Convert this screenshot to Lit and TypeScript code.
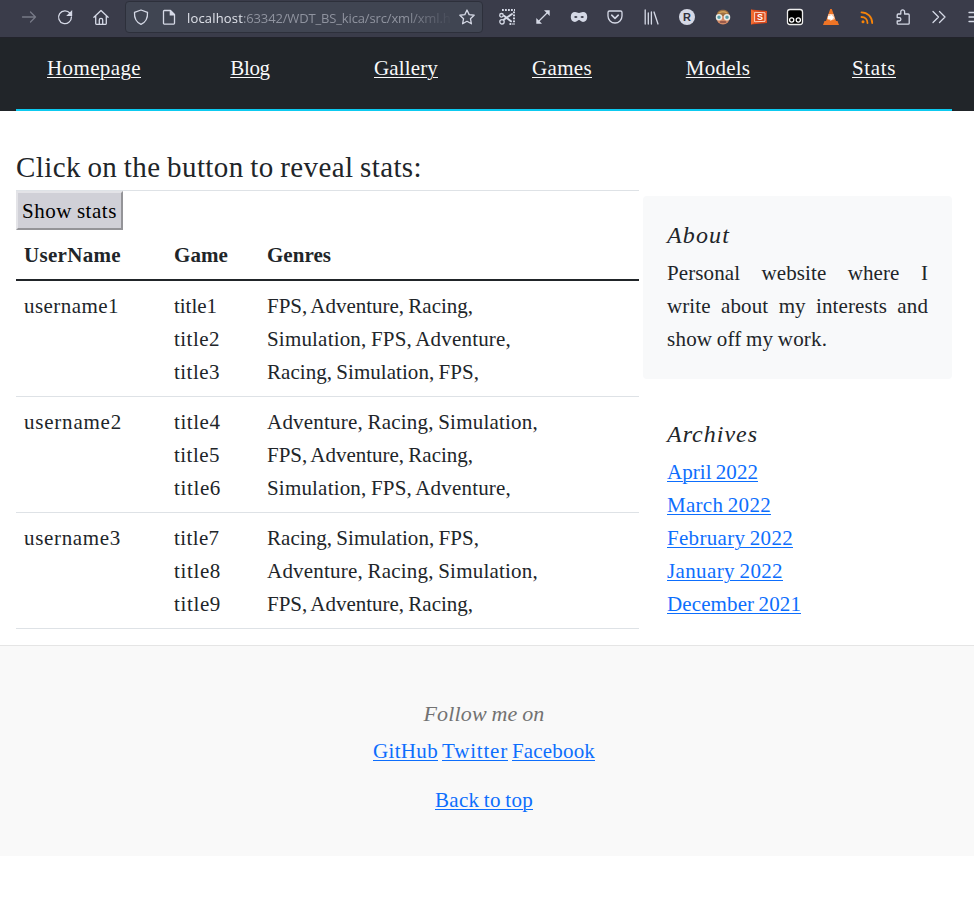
import { LitElement, html, svg, css, nothing } from "lit";
import { customElement } from "lit/decorators.js";

type Link = [label: string, width: number];

const NAV: Link[] = [["Homepage", 94], ["Blog", 39.5], ["Gallery", 64], ["Games", 60], ["Models", 64.5], ["Stats", 44]];
const ARCHIVES: Link[] = [["April 2022", 91], ["March 2022", 104], ["February 2022", 126], ["January 2022", 116], ["December 2021", 134]];
const SOCIAL: Link[] = [["GitHub", 65], ["Twitter", 66], ["Facebook", 83]];

const FAR: Link = ["FPS, Adventure, Racing,", 206];
const SFA: Link = ["Simulation, FPS, Adventure,", 244];
const RSF: Link = ["Racing, Simulation, FPS,", 212];
const ARS: Link = ["Adventure, Racing, Simulation,", 271];

const ROWS: { user: Link; titles: Link[]; genres: Link[] }[] = [
  { user: ["username1", 95], titles: [["title1", 43], ["title2", 46], ["title3", 46]], genres: [FAR, SFA, RSF] },
  { user: ["username2", 98], titles: [["title4", 46.5], ["title5", 46], ["title6", 47]], genres: [ARS, FAR, SFA] },
  { user: ["username3", 97], titles: [["title7", 45.5], ["title8", 47], ["title9", 47]], genres: [RSF, ARS, FAR] },
];

const ICONS: Record<string, unknown> = {
  forward: svg`<path class="dim" d="M1.5 8h13M9.5 3l5 5-5 5"/>`,
  reload: svg`<path d="M13 4.2A6.4 6.4 0 1 0 14.4 8"/><path class="solid" d="M15.2 1v6H9.2z"/>`,
  home: svg`<path d="M.9 8.3 8 1.5l7.100 6.800M2.700 7v7.600a.7.7 0 0 0 .7.7h9.200a.7.7 0 0 0 .7-.7V7M6.300 15v-4a1.700 1.700 0 0 1 3.400 0v4"/>`,
  shield: svg`<path d="M8 1 14.500 3.400c.3 5.200-1.400 9.700-6.500 12C2.900 13.100 1.200 8.600 1.500 3.400z"/>`,
  page: svg`<path d="M3.300 1.500h6.200l4 4v8.800a.8.8 0 0 1-.8.8H3.300a.8.8 0 0 1-.8-.8v-12a.8.8 0 0 1 .8-.8z"/><path class="solid" d="M8.700 1.500h1l4 4v1h-5z"/>`,
  star: svg`<path d="m8 1 2.150 4.600 5 .65-3.700 3.450.95 5.050L8 12.300l-4.400 2.450.95-5.050L.85 6.250l5-.65z"/>`,
  scissors: svg`<path class="dots" d="M3 1h13M15 2.500v13M10.500 15H14"/><path stroke-width="2" d="m5 10.500 8-5.500M5 6.800 12 12.300"/><circle cx="2.500" cy="6.300" r="1.800"/><circle cx="3" cy="12.800" r="2.200"/>`,
  resize: svg`<path d="M3 13 13 3"/><path class="solid" d="M9 1.300h5.700V7zM1.300 9v5.700H7z"/>`,
  mask: svg`<path class="solid" fill-rule="evenodd" d="M4 3c1.800 0 2.500 1 4 1s2.200-1 4-1c2.600 0 4.200 2 4.200 4.800S14.600 13 12 13c-2 0-2.700-1.900-4-1.900S6 13 4 13c-2.600 0-4.200-2.400-4.200-5.200S1.400 3 4 3zM3 8.100c1 1.300 2.700 1.300 3.600 0-1-1.400-2.600-1.400-3.600 0zm6.400 0c1 1.300 2.700 1.300 3.600 0-1-1.400-2.600-1.400-3.600 0z"/>`,
  pocket: svg`<path d="M2.500 2h11A1.500 1.500 0 0 1 15 3.500V7A7 7 0 0 1 1 7V3.500A1.500 1.500 0 0 1 2.500 2z"/><path stroke-width="1.600" d="m4.700 6.200 3.300 3.100 3.300-3.100"/>`,
  library: svg`<path d="M2.200 1v14M5.300 4v11M8.400 3v12M11 3l4 12"/>`,
  circled: svg`<circle class="solid" cx="8" cy="8" r="8"/><text x="8" y="12" class="letter dark">R</text>`,
  face: svg`<circle cx="8" cy="8.800" r="6.800" fill="#d38b67" stroke="none"/><path d="M1.500 7C2 2 5 .8 8 .8S14 2 14.500 7z" fill="#9c7043" stroke="none"/><path d="M4 4q4-2.500 8 0" stroke="#d4a35c"/><path d="M5.500 13h5" stroke="#884b42"/><circle cx="4" cy="8.200" r="2.500" fill="#579ba4" stroke="#e9ece9" stroke-width="1.500"/><circle cx="12" cy="8.200" r="2.500" fill="#579ba4" stroke="#e9ece9" stroke-width="1.500"/>`,
  slides: svg`<path d="m0 .500 16 1.500v12L0 15.500z" fill="#dc4a1c" stroke="none"/><path d="M0 .500 3 2v12l-3 1.500z" fill="#f16b31" stroke="none"/><path d="m4 3.300 10 .5v8.500l-10 .5z" stroke="#fbd9c8" stroke-width="1"/><text x="9.100" y="11.200" class="letter small">S</text>`,
  monkey: svg`<rect x=".5" y=".5" width="15" height="15" rx="2.500" fill="#000" stroke="#eee"/><circle cx="4.700" cy="11" r="2.100" stroke="#fff"/><circle cx="11.300" cy="11" r="2.100" stroke="#fff"/>`,
  cone: svg`<path d="M7.200 0h1.600L13 12h1.500l1.500 4H0l1.500-4H3z" fill="#ee7426" stroke="none"/><path d="M5.500 5h5l1.500 5q-4 2.500-8 0z" fill="#f9c5a4" stroke="none"/><path d="M5 7h2.500V5l3.500 3.500-3.500 3.500v-2H5z" fill="#fff" stroke="none"/>`,
  feed: svg`<g stroke="#f78409" stroke-width="1.800"><path d="M2.500 3.300c6 0 10.700 4.700 10.700 10.700M2.500 8c3.500 0 6 2.500 6 6"/></g><circle cx="4" cy="12.700" r="1.500" fill="#f78409" stroke="none"/>`,
  puzzle: svg`<path d="M2.200 12v2.200a1 1 0 0 0 1 1h10a1 1 0 0 0 1-1V6a1 1 0 0 0-1-1H9.600V2.700a1.900 1.900 0 0 0-3.800 0V5H3.200a1 1 0 0 0-1 1v2.600h2a1.700 1.700 0 0 1 0 3.400z"/>`,
  more: svg`<path d="m2 2.500 5.500 5.500L2 13.500M8.500 2.500 14 8l-5.500 5.500"/>`,
  menu: svg`<path d="M2 3.500h14M2 8h14M2 12.500h14"/>`,
};

const EXTENSIONS = ["scissors", "resize", "mask", "pocket", "library", "circled", "face", "slides", "monkey", "cone", "feed", "puzzle", "more", "menu"];

@customElement("app-root")
class AppRoot extends LitElement {
  static styles = css`
    :host { display: block; height: 921px; overflow: hidden; background: #fff; color: #212529;
      font: 21px/33px "Liberation Serif", serif; word-spacing: -1px; }
    * { box-sizing: border-box; }
    .toolbar { display: flex; align-items: center; height: 38px; padding: 0 0 3px 11px; overflow: hidden;
      background: #3a3c4a; border-bottom: 1px solid #22232b; }
    .slot { flex: 0 0 36px; display: flex; justify-content: center; }
    svg { display: block; flex: none; width: 16px; height: 16px; fill: none; stroke: #d5d9e6; stroke-width: 1.3;
      stroke-linecap: round; stroke-linejoin: round; }
    .dim { stroke: #777a87; }
    .solid { fill: #d5d9e6; stroke: none; }
    .dots { stroke-width: 2; stroke-dasharray: 1.8 1.2; stroke-linecap: butt; }
    .letter { font: bold 11px "Liberation Sans", sans-serif; text-anchor: middle; fill: #fff; stroke: none; }
    .dark { fill: #30323e; }
    .small { font-size: 9px; }
    .address { flex: 0 0 358px; min-width: 0; display: flex; align-items: center; height: 32px; margin: 0 6px; padding: 0 7px;
      background: #404552; border: 1px solid #2d303b; border-radius: 4px; }
    .url { flex: 1; min-width: 0; margin: 0 8px 0 10px; overflow: hidden; white-space: nowrap; color: #8f939f;
      font: 13px/20px "Open Sans", sans-serif; padding-top: 1px;
      mask-image: linear-gradient(to right, #000 82%, transparent 101%); }
    .host { color: #dfe2ea; }
    .page { margin-left: 12px; }
    .header { height: 73px; padding: 0 22px 0 16px; background: #212529; }
    .nav { display: grid; grid-template-columns: repeat(6, 1fr); height: 73px; padding-top: 14px;
      text-align: center; border-bottom: 2px solid #0dcaf0; }
    a { color: #0d6efd; text-decoration: underline 1px; text-underline-offset: 2px; }
    .nav a { color: #f8f9fa; }
    .fit { white-space: nowrap; }
    .title { margin: 0; padding: 37px 0 0 16px; height: 79px; font-size: 29px; line-height: 38px; font-weight: 400; }
    .content { display: flex; height: 455px; padding: 0 22px 0 16px; }
    .stats { width: 623px; height: 439px; border-top: 1px solid #dee2e6; }
    .reveal { display: block; width: 107px; height: 39px; padding: 1px 0 0 4px; background: #d0d0d7;
      border: 2px solid; border-color: #e3e3e7 #949498 #949498 #e3e3e7; color: #000; font: inherit;
      word-spacing: inherit; text-align: left; }
    .row { display: grid; grid-template-columns: 150px 93px 1fr; padding: 9px 0 7px 8px; border-bottom: 1px solid #dee2e6; }
    .head { height: 51px; border-bottom: 2px solid #212529; font-weight: 700; }
    .side { width: 309px; margin: 6px 0 0 4px; }
    .card { padding: 25px 24px 23px; }
    .about { height: 183px; margin-bottom: 16px; background: #f8f9fa; border-radius: 4px; }
    h4 { margin: 0 0 7px; font-size: 24px; line-height: 29px; font-weight: 400; font-style: italic; }
    .text { margin: 0; letter-spacing: 0.1px; }
    .text div { text-align: justify; text-align-last: justify; }
    .text .end { text-align-last: left; }
    .footer { height: 211px; padding: 53px 6px 0 0; background: #f9f9f9; border-top: 1px solid #e5e5e5; text-align: center; }
    .footer h4 { font-size: 22px; color: #727272; }
    .social { display: flex; justify-content: center; gap: 4px; margin-bottom: 16px; }
  `;

  // Tracks each label so that it fills its nominal width.
  protected firstUpdated() {
    this.renderRoot.querySelectorAll<HTMLElement>(".fit").forEach((el) => {
      const spare = Number(el.dataset.w) - el.getBoundingClientRect().width;
      el.style.letterSpacing = `${spare / el.textContent!.length}px`;
    });
  }

  private icon(name: string) {
    return html`<svg viewBox="0 0 16 16" overflow="visible">${ICONS[name] ?? nothing}</svg>`;
  }

  private label([text, width]: Link) {
    return html`<span class="fit" data-w=${width}>${text}</span>`;
  }

  private link([text, width]: Link) {
    return html`<a class="fit" href="#" data-w=${width}>${text}</a>`;
  }

  render() {
    return html`
      <div class="toolbar">
        ${["forward", "reload", "home"].map((n) => html`<span class="slot">${this.icon(n)}</span>`)}
        <div class="address">
          ${this.icon("shield")}<span class="page">${this.icon("page")}</span>
          <div class="url"><span class="fit host" data-w="56">localhost</span><span class="fit" data-w="212">:63342/WDT_BS_kica/src/xml/xml.ht</span></div>
          ${this.icon("star")}
        </div>
        ${EXTENSIONS.map((n) => html`<span class="slot">${this.icon(n)}</span>`)}
      </div>
      <header class="header">
        <nav class="nav">${NAV.map((l) => html`<div>${this.link(l)}</div>`)}</nav>
      </header>
      <h3 class="title">${this.label(["Click on the button to reveal stats:", 406])}</h3>
      <main class="content">
        <section class="stats">
          <button class="reveal">${this.label(["Show stats", 95])}</button>
          <div class="row head">${([["UserName", 97], ["Game", 54], ["Genres", 64]] as Link[]).map((l) => html`<div>${this.label(l)}</div>`)}</div>
          ${ROWS.map((r) => html`<div class="row">
            <div>${this.label(r.user)}</div>
            <div>${r.titles.map((t) => html`<div>${this.label(t)}</div>`)}</div>
            <div>${r.genres.map((g) => html`<div>${this.label(g)}</div>`)}</div>
          </div>`)}
        </section>
        <aside class="side">
          <div class="card about">
            <h4>${this.label(["About", 63])}</h4>
            <div class="text">
              <div>Personal website where I</div>
              <div>write about my interests and</div>
              <div class="end">${this.label(["show off my work.", 162])}</div>
            </div>
          </div>
          <div class="card">
            <h4>${this.label(["Archives", 91])}</h4>
            ${ARCHIVES.map((l) => html`<div>${this.link(l)}</div>`)}
          </div>
        </aside>
      </main>
      <footer class="footer">
        <h4>${this.label(["Follow me on", 121])}</h4>
        <div class="social">${SOCIAL.map((l) => this.link(l))}</div>
        <div>${this.link(["Back to top", 98])}</div>
      </footer>
    `;
  }
}
